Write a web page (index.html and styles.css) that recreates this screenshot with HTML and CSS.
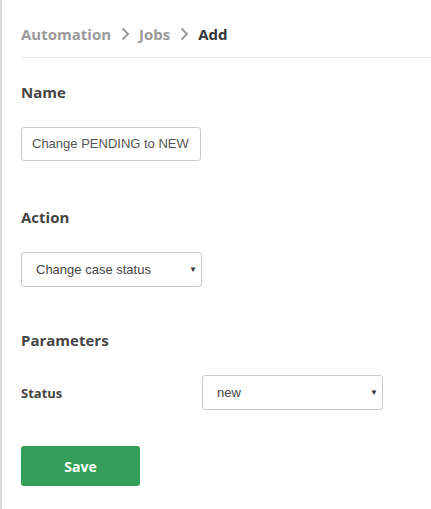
FILE: index.html
```html
<!DOCTYPE html>
<html>
<head>
<meta charset="utf-8">
<link rel="stylesheet" href="styles.css">
</head>
<body>
<div class="page">
  <nav class="crumbs">
    <span class="crumb">Automation</span>
    <svg class="chev" width="10" height="14" viewBox="0 0 10 14"><path d="M2.5 1.5 L8 7 L2.5 12.5" fill="none" stroke="#999" stroke-width="2"/></svg>
    <span class="crumb">Jobs</span>
    <svg class="chev" width="10" height="14" viewBox="0 0 10 14"><path d="M2.5 1.5 L8 7 L2.5 12.5" fill="none" stroke="#999" stroke-width="2"/></svg>
    <span class="crumb current">Add</span>
  </nav>
  <div class="content">
    <h2 class="heading">Name</h2>
    <div class="field">
      <div class="input">Change PENDING to NEW</div>
    </div>
    <h2 class="heading spaced">Action</h2>
    <div class="field">
      <div class="select"><span>Change case status</span><span class="arrow">▼</span></div>
    </div>
    <h2 class="heading spaced-sm">Parameters</h2>
    <div class="param-row">
      <label class="param-label">Status</label>
      <div class="select"><span>new</span><span class="arrow">▼</span></div>
    </div>
    <button class="save">Save</button>
  </div>
</div>
</body>
</html>
```
FILE: styles.css
```css
html, body {
  margin: 0;
  padding: 0;
  background: #fff;
}
.page {
  border-left: 2px solid #dcdcdc;
  min-height: 509px;
  box-sizing: border-box;
  padding-left: 19px;
  font-family: "Open Sans", sans-serif;
}
.crumbs {
  display: flex;
  align-items: center;
  gap: 9px;
  height: 58px;
  box-sizing: border-box;
  padding-top: 10px;
  border-bottom: 1px solid #e6e6e6;
  font-size: 15px;
  font-weight: 700;
  line-height: 22px;
}
.crumb { color: #9a9a9a; }
.crumb.current { color: #333; }
.chev { display: block; }
.content {
  padding-top: 23px;
}
.heading {
  margin: 0;
  font-size: 15px;
  font-weight: 700;
  color: #444;
  line-height: 22px;
}
.heading.spaced { margin-top: 45px; }
.heading.spaced-sm { margin-top: 42px; }
.field { margin-top: 24px; }
.input {
  width: 180px;
  height: 34px;
  box-sizing: border-box;
  border: 1px solid #ccc;
  border-radius: 3px;
  padding: 0 10px;
  font-family: "Liberation Sans", Arial, sans-serif;
  font-size: 13px;
  color: #555;
  line-height: 32px;
  white-space: nowrap;
}
.select {
  width: 181px;
  height: 35px;
  box-sizing: border-box;
  border: 1px solid #ccc;
  border-radius: 3px;
  padding: 0 4px 0 14px;
  font-family: "Liberation Sans", Arial, sans-serif;
  font-size: 13px;
  color: #444;
  display: flex;
  align-items: center;
  justify-content: space-between;
}
.arrow {
  font-size: 8px;
  color: #333;
}
.param-row {
  margin-top: 24px;
  display: grid;
  grid-template-columns: 181px 181px;
  align-items: center;
}
.param-label {
  font-size: 13px;
  font-weight: 700;
  color: #444;
}
.save {
  display: block;
  margin-top: 36px;
  width: 119px;
  height: 40px;
  border: none;
  border-radius: 3px;
  background: #349e59;
  color: #fff;
  font-family: "Open Sans", sans-serif;
  font-weight: 700;
  font-size: 14px;
  padding: 0;
}
```
